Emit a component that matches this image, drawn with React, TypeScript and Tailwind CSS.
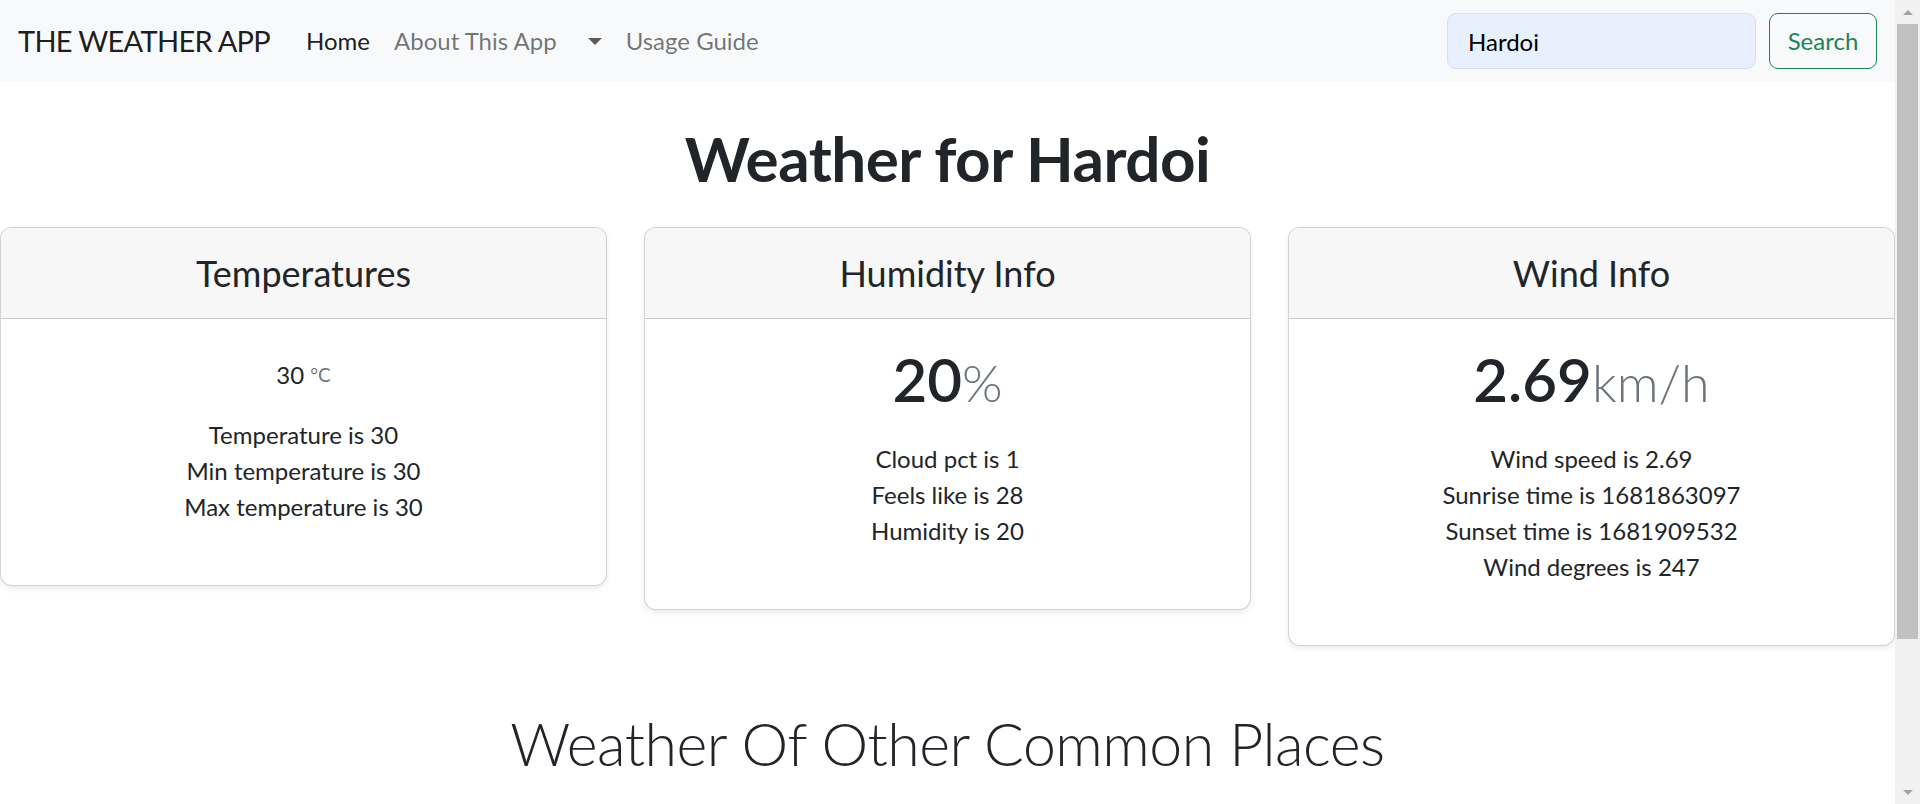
import React from "react";

// Card data for the three info panels
const cards = [
  {
    title: "Temperatures",
    kind: "small" as const,
    value: "30",
    unit: "°C",
    lines: ["Temperature is 30", "Min temperature is 30", "Max temperature is 30"],
  },
  {
    title: "Humidity Info",
    kind: "big" as const,
    value: "20",
    unit: "%",
    lines: ["Cloud pct is 1", "Feels like is 28", "Humidity is 20"],
  },
  {
    title: "Wind Info",
    kind: "big" as const,
    value: "2.69",
    unit: "km/h",
    lines: [
      "Wind speed is 2.69",
      "Sunrise time is 1681863097",
      "Sunset time is 1681909532",
      "Wind degrees is 247",
    ],
  },
];

type CardProps = (typeof cards)[number];

const InfoCard = ({ title, kind, value, unit, lines }: CardProps) => (
  <div className="bg-white border border-black/[0.175] rounded-[12px] shadow-[0_3px_6px_rgba(0,0,0,0.075)] overflow-hidden">
    <div className="h-[91px] bg-[#f7f7f7] border-b border-black/[0.175] flex items-center justify-center">
      <h4 className="text-[36px] leading-[43px] font-normal">{title}</h4>
    </div>
    <div className="pt-[24px] pb-[60px] text-center">
      {kind === "small" ? (
        <div className="h-[64px] mb-[10px] flex items-center justify-center gap-[6px]">
          <span className="text-[24px]">{value}</span>
          <span className="text-[19px] text-[#6c757d]">{unit}</span>
        </div>
      ) : (
        <h1 className="h-[72px] mb-[26px] text-[60px] leading-[72px] font-semibold">
          {value}
          <small className="text-[52px] font-light text-[#6c757d]">{unit}</small>
        </h1>
      )}
      <ul className="text-[24px] leading-[36px]">
        {lines.map((line) => (
          <li key={line}>{line}</li>
        ))}
      </ul>
    </div>
  </div>
);

const Navbar = () => (
  <nav className="h-[82px] bg-[#f8f9fa] px-[18px] flex items-center">
    <a className="text-[29px] tracking-[-0.7px] text-black/90 mr-[24px]">THE WEATHER APP</a>
    <ul className="flex items-center text-[24px]">
      <li className="px-[12px] text-black/90">Home</li>
      <li className="px-[12px] text-black/55">About This App</li>
      <li className="pl-[19px] pr-[12px] flex items-center">
        <span className="block border-x-[7px] border-t-[7px] border-b-0 border-x-transparent border-t-[#5c5c5c]" />
      </li>
      <li className="px-[12px] text-black/55">Usage Guide</li>
    </ul>
    <form className="ml-auto flex items-center gap-[13px]">
      <input
        defaultValue="Hardoi"
        className="w-[309px] h-[56px] bg-[#e8f0fe] border border-[#d9e0ea] rounded-[9px] px-[20px] text-[24px] text-black outline-none"
      />
      <button
        type="button"
        className="w-[108px] h-[56px] border border-[#198754] text-[#198754] rounded-[9px] text-[24px]"
      >
        Search
      </button>
    </form>
  </nav>
);

// Fake browser scrollbar on the right edge
const Scrollbar = () => (
  <div className="w-[25px] shrink-0 bg-[#f1f1f1] flex flex-col items-center">
    <div className="h-[24px] flex items-center justify-center">
      <span className="block border-x-[5px] border-b-[5px] border-t-0 border-x-transparent border-b-[#a3a3a3]" />
    </div>
    <div className="w-[21px] h-[615px] bg-[#c1c1c1]" />
    <div className="flex-1" />
    <div className="h-[24px] flex items-center justify-center">
      <span className="block border-x-[5px] border-t-[5px] border-b-0 border-x-transparent border-t-[#a3a3a3]" />
    </div>
  </div>
);

export default function App() {
  return (
    <div className="h-[804px] flex overflow-hidden bg-white text-[#212529] font-['Lato',sans-serif]">
      <div className="flex-1 min-w-0">
        <Navbar />
        <h1 className="mt-[33px] text-center text-[62px] tracking-[-0.5px] leading-[86px] font-bold">
          Weather for Hardoi
        </h1>
        <div className="mt-[26px] grid grid-cols-3 gap-[37px] items-start">
          {cards.map((card) => (
            <InfoCard key={card.title} {...card} />
          ))}
        </div>
        <h2 className="mt-[62px] text-center text-[59px] tracking-[-0.5px] leading-[72px] font-light">
          Weather Of Other Common Places
        </h2>
      </div>
      <Scrollbar />
    </div>
  );
}
